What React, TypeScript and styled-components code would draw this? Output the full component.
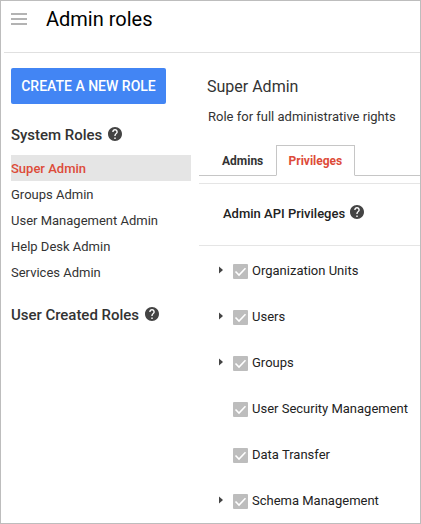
import React from "react";
import styled, { createGlobalStyle, css } from "styled-components";

const GlobalStyle = createGlobalStyle`
  *, *::before, *::after { box-sizing: border-box; }
  body { margin: 0; background: #fff; }
`;

const Page = styled.div`
  width: 421px;
  height: 524px;
  overflow: hidden;
  border: 1px solid #bdbdbd;
  background: #fff;
  color: #333;
  font-family: Roboto, Arial, sans-serif;
  font-size: 13px;
  white-space: nowrap;
`;

const Header = styled.header`
  display: flex;
  align-items: flex-start;
  gap: 19px;
  height: 52px;
  margin-left: 3px;
  padding: 6px 0 0 7px;
  border-bottom: 1px solid #e0e0e0;
`;

const MenuButton = styled.button`
  display: flex;
  flex-direction: column;
  gap: 3px;
  width: 16px;
  margin-top: 6px;
  padding: 0;
  border: 0;
  background: none;
`;

const MenuBar = styled.span`
  width: 16px;
  height: 2px;
  background: #b3b3b3;
`;

const Title = styled.h1`
  margin: 0;
  color: #000;
  font-size: 20px;
  font-weight: 400;
  line-height: 24px;
`;

const Body = styled.div`
  display: flex;
`;

const Sidebar = styled.aside`
  width: 198px;
  padding: 15px 8px 0 10px;
`;

const CreateButton = styled.button`
  display: block;
  width: 155px;
  height: 36px;
  padding: 1px 0 0;
  border: 0;
  border-radius: 2px;
  background: #4285f4;
  color: #fff;
  font: 500 14px/35px Roboto, Arial, sans-serif;
  text-align: center;
`;

const HelpIcon = styled.svg`
  flex: none;
  width: 14px;
  height: 14px;
  margin-bottom: 2px;
  fill: #444;
`;

const SectionTitle = styled.h2<{ $top: number }>`
  display: flex;
  align-items: center;
  gap: 6px;
  height: 20px;
  margin: ${({ $top }) => $top}px 0 0;
  font-size: 15px;
  font-weight: 500;
  line-height: 20px;
  letter-spacing: -0.03px;
`;

const RoleList = styled.ul`
  margin: 10px 0 0;
  padding: 0;
  list-style: none;
`;

const RoleItem = styled.li<{ $selected?: boolean }>`
  height: 26px;
  line-height: 27px;
  ${({ $selected }) =>
    $selected &&
    css`
      background: #e5e5e5;
      color: #dd4b39;
      font-weight: 500;
    `}
`;

const Main = styled.main`
  flex: 1;
`;

const RoleName = styled.h2`
  margin: 24px 0 0 8px;
  font-size: 16px;
  font-weight: 400;
  line-height: 20px;
`;

const Description = styled.p`
  margin: 10px 0 0 9px;
  line-height: 20px;
`;

const Tabs = styled.nav`
  display: flex;
  height: 31px;
  margin-top: 18px;
`;

const Tab = styled.div<{ $active?: boolean }>`
  width: ${({ $active }) => ($active ? 79 : 77)}px;
  padding-left: ${({ $active }) => ($active ? 11.5 : 23)}px;
  border: 1px solid transparent;
  border-width: ${({ $active }) => ($active ? "1px" : "1px 0")};
  border-color: ${({ $active }) => ($active ? "#c6c6c6 #c6c6c6 transparent" : "transparent transparent #c6c6c6")};
  color: ${({ $active }) => ($active ? "#dd4b39" : "#333")};
  font-size: 12px;
  font-weight: 700;
  line-height: 30px;
`;

const TabRule = styled.div`
  flex: 1;
  border-bottom: 1px solid #c6c6c6;
`;

const GroupHeader = styled.h3`
  display: flex;
  align-items: center;
  gap: 5px;
  height: 63px;
  margin: 7px 0 0;
  padding: 0 0 3px 24px;
  border: solid #e5e5e5;
  border-width: 1px 0;
  font-size: 13px;
  font-weight: 500;
  color: #222;
`;

const PrivilegeList = styled.ul`
  margin: 1px 0 0;
  padding: 0;
  list-style: none;
`;

const PrivilegeRow = styled.li`
  display: flex;
  align-items: center;
  height: 46px;
  padding-left: 19px;
  color: #222;
`;

const ArrowSlot = styled.span`
  width: 15px;
  height: 8px;
  svg { display: block; }
`;

const Checkbox = styled.span`
  width: 15px;
  height: 15px;
  margin: 3px 4px 0 0;
  border-radius: 1px;
  background: #bdbdbd;
  svg { display: block; }
`;

function Help() {
  return (
    <HelpIcon viewBox="2 2 20 20" aria-label="Help">
      <path d="M12 2C6.48 2 2 6.48 2 12s4.48 10 10 10 10-4.48 10-10S17.52 2 12 2zm1 17h-2v-2h2v2zm2.07-7.75l-.9.92C13.45 12.9 13 13.5 13 15h-2v-.5c0-1.1.45-2.1 1.17-2.83l1.24-1.26c.37-.36.59-.86.59-1.41 0-1.1-.9-2-2-2s-2 .9-2 2H8c0-2.21 1.79-4 4-4s4 1.79 4 4c0 .88-.36 1.68-.93 2.25z" />
    </HelpIcon>
  );
}

const roles = ["Super Admin", "Groups Admin", "User Management Admin", "Help Desk Admin", "Services Admin"];

const privileges = [
  { name: "Organization Units", expandable: true },
  { name: "Users", expandable: true },
  { name: "Groups", expandable: true },
  { name: "User Security Management", expandable: false },
  { name: "Data Transfer", expandable: false },
  { name: "Schema Management", expandable: true },
];

export default function App() {
  return (
    <>
      <GlobalStyle />
      <Page>
        <Header>
          <MenuButton aria-label="Menu">
            <MenuBar />
            <MenuBar />
            <MenuBar />
          </MenuButton>
          <Title>Admin roles</Title>
        </Header>
        <Body>
          <Sidebar>
            <CreateButton>CREATE A NEW ROLE</CreateButton>
            <SectionTitle $top={21}>System Roles <Help /></SectionTitle>
            <RoleList>
              {roles.map((role, i) => (
                <RoleItem key={role} $selected={i === 0}>{role}</RoleItem>
              ))}
            </RoleList>
            <SectionTitle $top={20}>User Created Roles <Help /></SectionTitle>
          </Sidebar>
          <Main>
            <RoleName>Super Admin</RoleName>
            <Description>Role for full administrative rights</Description>
            <Tabs>
              <Tab>Admins</Tab>
              <Tab $active>Privileges</Tab>
              <TabRule />
            </Tabs>
            <GroupHeader>Admin API Privileges <Help /></GroupHeader>
            <PrivilegeList>
              {privileges.map(({ name, expandable }) => (
                <PrivilegeRow key={name}>
                  <ArrowSlot>
                    {expandable && (
                      <svg width="6" height="8" viewBox="0 0 6 8">
                        <path d="M1 0.5L5 4L1 7.5Z" fill="#444" />
                      </svg>
                    )}
                  </ArrowSlot>
                  <Checkbox role="checkbox" aria-checked="true" aria-disabled="true" aria-label={name}>
                    <svg width="15" height="15" viewBox="0 0 15 15">
                      <path d="M2.5 7.5L6 11L12.5 4.3" fill="none" stroke="#fff" strokeWidth="1.6" />
                    </svg>
                  </Checkbox>
                  {name}
                </PrivilegeRow>
              ))}
            </PrivilegeList>
          </Main>
        </Body>
      </Page>
    </>
  );
}
